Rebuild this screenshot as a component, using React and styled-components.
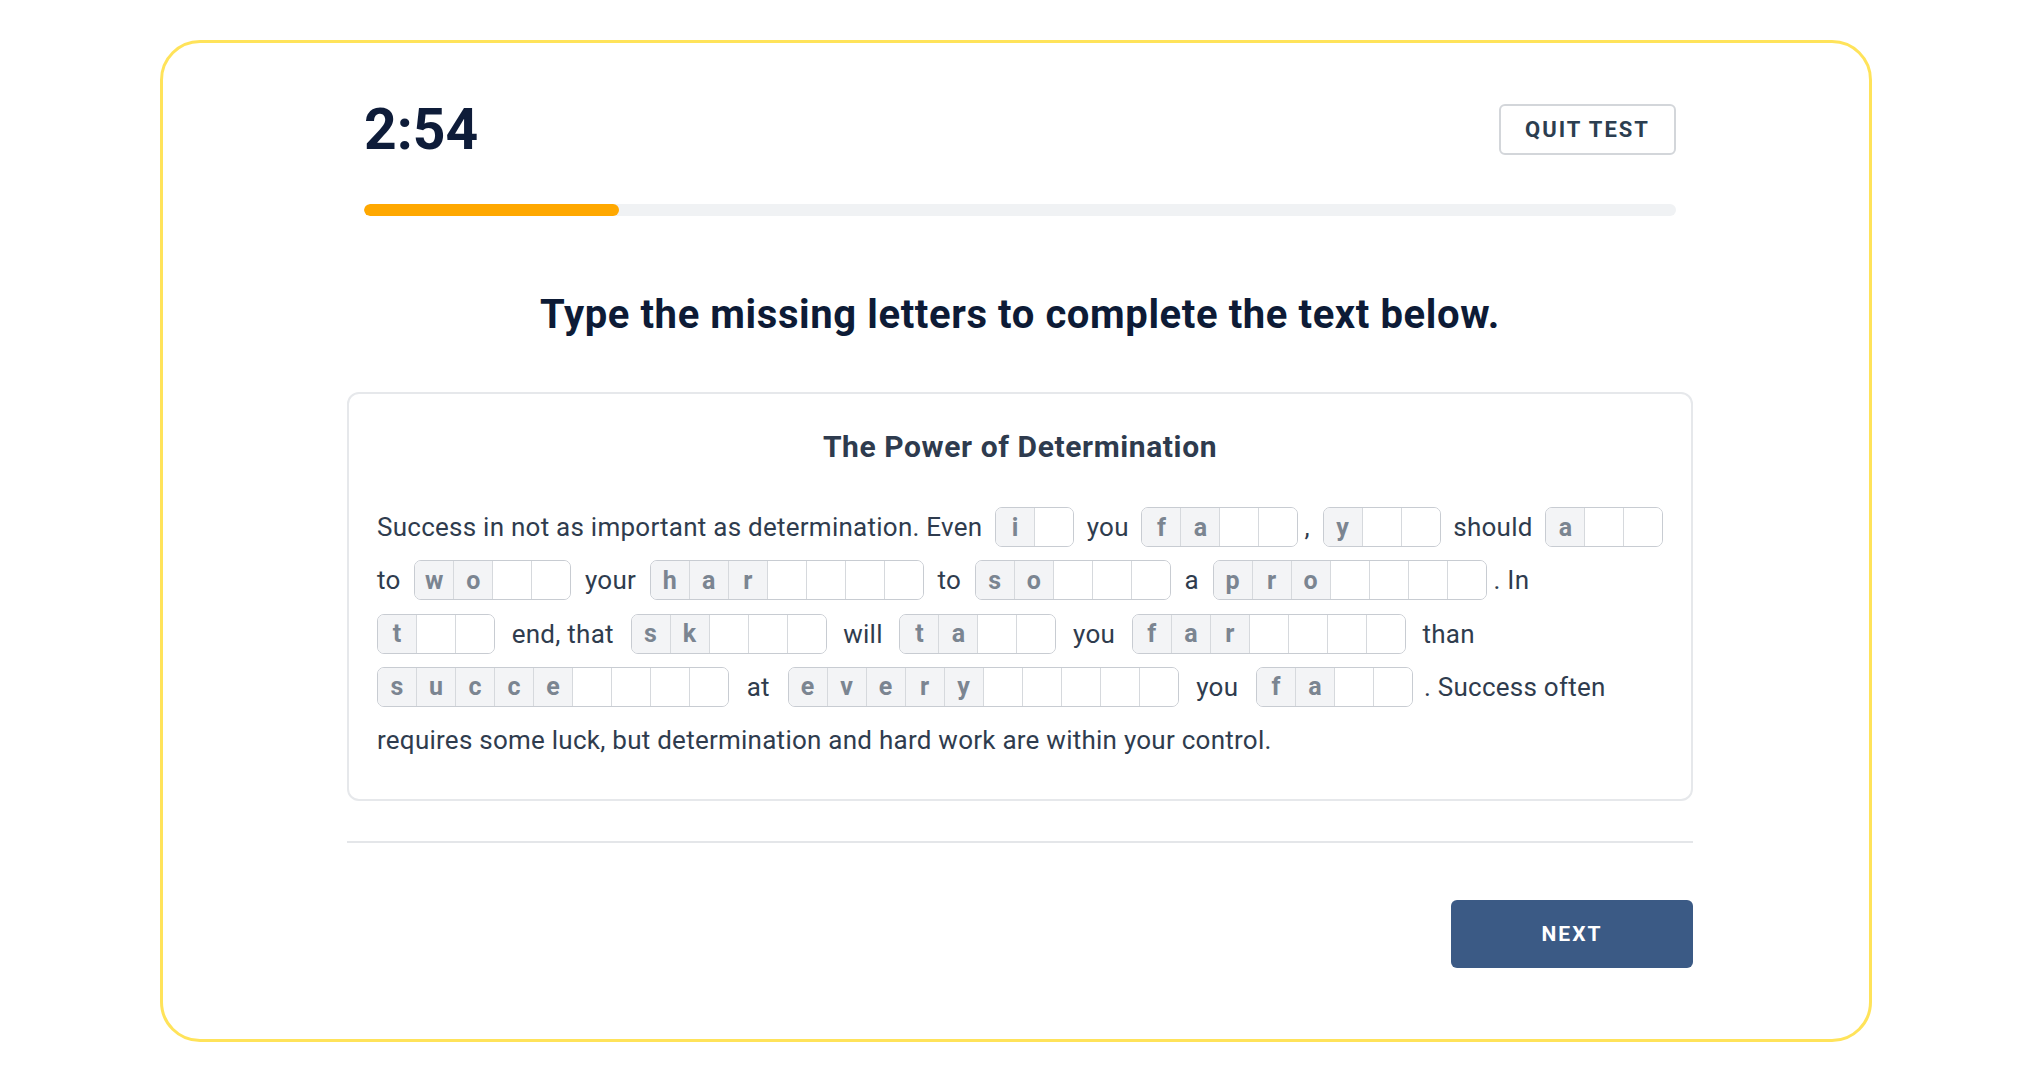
import React from "react";
import styled, { createGlobalStyle } from "styled-components";

const GlobalStyle = createGlobalStyle`
  body {
    margin: 0;
    background: #ffffff;
    font-family: Roboto, "Liberation Sans", sans-serif;
  }
`;

const Frame = styled.div`
  box-sizing: border-box;
  margin: 40px 0 0 160px;
  width: 1712px;
  height: 1002px;
  border: 3px solid #ffe35a;
  border-radius: 40px;
  padding: 61px 0 0 184px;
`;

const Column = styled.div`
  width: 1346px;
  display: flex;
  flex-direction: column;
`;

const Header = styled.div`
  display: flex;
  justify-content: space-between;
  align-items: center;
  height: 51px;
  padding: 0 17px;
`;

const Timer = styled.div`
  font-size: 57px;
  font-weight: 700;
  line-height: 1;
  color: #0e1c39;
`;

const QuitButton = styled.button`
  box-sizing: border-box;
  width: 177px;
  height: 51px;
  background: #ffffff;
  border: 2px solid #d3d6da;
  border-radius: 6px;
  font-family: inherit;
  font-size: 22px;
  font-weight: 700;
  letter-spacing: 2px;
  color: #2c3e50;
  cursor: pointer;
`;

const Track = styled.div`
  margin: 49px 17px 0;
  height: 12px;
  border-radius: 6px;
  background: #f0f2f4;
  overflow: hidden;
`;

const Fill = styled.div`
  height: 100%;
  border-radius: 6px;
  background: #ffa800;
`;

const Heading = styled.h1`
  margin: 75px 0 0;
  font-size: 40px;
  line-height: 48px;
  font-weight: 700;
  letter-spacing: 0.6px;
  text-align: center;
  color: #0d1b36;
`;

const Card = styled.div`
  margin-top: 53px;
  border: 2px solid #e6e8eb;
  border-radius: 12px;
  padding: 36px 28px 32px;
`;

const CardTitle = styled.h2`
  margin: 0 0 37px;
  font-size: 30px;
  line-height: 34px;
  font-weight: 700;
  letter-spacing: 0.6px;
  text-align: center;
  color: #2e3b4e;
`;

// each line keeps its own break; $gap is the space around the letter boxes
const Line = styled.div`
  --gap: ${(p) => p.$gap}px;
  white-space: nowrap;
  font-size: 26px;
  letter-spacing: 0.25px;
  line-height: 53.25px;
  color: #2f3c4e;
`;

const WordBox = styled.span`
  box-sizing: border-box;
  display: inline-flex;
  vertical-align: middle;
  height: 40px;
  margin: 0 var(--gap) 4px ${(p) => (p.$first ? "0" : "var(--gap)")};
  border: 1.5px solid #c8ccd2;
  border-radius: 7px;
  overflow: hidden;
  letter-spacing: 0;
`;

const Cell = styled.span`
  display: flex;
  align-items: center;
  justify-content: center;
  width: 38px;
  font-size: 25px;
  font-weight: 700;
  line-height: 1;
  color: #7b8591;
  background: ${(p) => (p.$filled ? "#f3f4f6" : "#ffffff")};
  & + & {
    border-left: 1px solid #d6d9dd;
  }
`;

const Divider = styled.div`
  margin-top: 40px;
  height: 2px;
  background: #e4e6e9;
`;

const NextButton = styled.button`
  align-self: flex-end;
  margin-top: 57px;
  width: 242px;
  height: 68px;
  border: none;
  border-radius: 6px;
  background: #3b5a85;
  font-family: inherit;
  font-size: 21px;
  font-weight: 700;
  letter-spacing: 2px;
  color: #ffffff;
  cursor: pointer;
`;

const b = (given, len) => ({ given, len });

const lines = [
  { gap: 6, tokens: ["Success in not as important as determination. Even", b("i", 2), "you", b("fa", 4), ",", b("y", 3), "should", b("a", 3)] },
  { gap: 7, tokens: ["to", b("wo", 4), "your", b("har", 7), "to", b("so", 5), "a", b("pro", 7), ". In"] },
  { gap: 10, tokens: [b("t", 3), "end, that", b("sk", 5), "will", b("ta", 4), "you", b("far", 7), "than"] },
  { gap: 11, tokens: [b("succe", 9), "at", b("every", 10), "you", b("fa", 4), ". Success often"] },
  { gap: 7, tokens: ["requires some luck, but determination and hard work are within your control."] },
];

function LetterBox({ given, len, first }) {
  const cells = [];
  for (let i = 0; i < len; i++) {
    cells.push(
      <Cell key={i} $filled={i < given.length}>
        {given[i] || ""}
      </Cell>
    );
  }
  return <WordBox $first={first}>{cells}</WordBox>;
}

function renderLine(tokens) {
  const out = [];
  tokens.forEach((t, i) => {
    if (typeof t === "string") {
      const punct = t[0] === "," || t[0] === ".";
      out.push((i > 0 && !punct ? " " : "") + t + " ");
    } else {
      out.push(<LetterBox key={i} given={t.given} len={t.len} first={i === 0} />);
    }
  });
  return out;
}

export default function App() {
  return (
    <>
      <GlobalStyle />
      <Frame>
        <Column>
          <Header>
            <Timer>2:54</Timer>
            <QuitButton>QUIT TEST</QuitButton>
          </Header>
          <Track>
            <Fill style={{ width: "19.4%" }} />
          </Track>
          <Heading>Type the missing letters to complete the text below.</Heading>
          <Card>
            <CardTitle>The Power of Determination</CardTitle>
            {lines.map((l, i) => (
              <Line key={i} $gap={l.gap}>
                {renderLine(l.tokens)}
              </Line>
            ))}
          </Card>
          <Divider />
          <NextButton>NEXT</NextButton>
        </Column>
      </Frame>
    </>
  );
}
